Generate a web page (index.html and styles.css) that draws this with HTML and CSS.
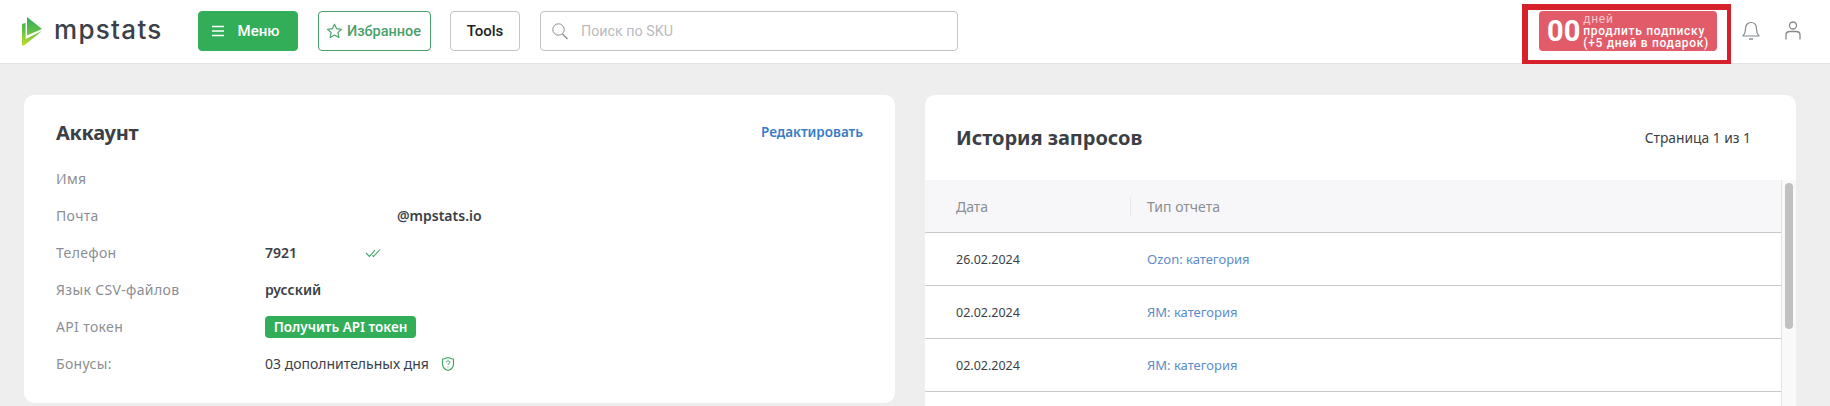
FILE: index.html
```html
<!DOCTYPE html>
<html lang="ru">
<head>
<meta charset="utf-8">
<title>MPSTATS</title>
<link rel="stylesheet" href="styles.css">
</head>
<body>
<div class="app">
  <header class="topbar">
    <a class="logo">
      <svg class="logo-mark" width="21" height="29" viewBox="0 0 21 29">
        <defs>
          <linearGradient id="lg" gradientUnits="userSpaceOnUse" x1="10" y1="0" x2="6" y2="29">
            <stop offset="0" stop-color="#2fae5a"/>
            <stop offset="0.5" stop-color="#62bf45"/>
            <stop offset="1" stop-color="#c0de2a"/>
          </linearGradient>
        </defs>
        <path d="M5 0 L20 12 L5 18.5 Z" fill="url(#lg)"/>
        <path d="M0 7 L3.6 6 L3.6 22 L20 14 L2 28.5 L0 28.5 Z" fill="url(#lg)"/>
      </svg>
      <span class="logo-text">mpstats</span>
    </a>
    <button class="btn btn-menu">
      <svg width="14" height="12" viewBox="0 0 14 12"><path d="M1 1.5H13M1 6H13M1 10.5H13" stroke="#fff" stroke-width="1.5" fill="none"/></svg>
      <span>Меню</span>
    </button>
    <button class="btn btn-fav">
      <svg width="17" height="16" viewBox="0 0 17 16"><path d="M8.5 1.2 L10.6 5.7 L15.5 6.3 L11.9 9.6 L12.9 14.5 L8.5 12 L4.1 14.5 L5.1 9.6 L1.5 6.3 L6.4 5.7 Z" fill="none" stroke="#4fa56d" stroke-width="1.2" stroke-linejoin="round"/></svg>
      <span>Избранное</span>
    </button>
    <button class="btn btn-tools">Tools</button>
    <div class="search">
      <svg width="16" height="17" viewBox="0 0 16 17"><circle cx="6.5" cy="6.5" r="5.7" fill="none" stroke="#8a8d91" stroke-width="1"/><path d="M10.5 11 L15.5 16" stroke="#8a8d91" stroke-width="1.3" fill="none"/></svg>
      <span>Поиск по SKU</span>
    </div>
    <div class="top-right">
      <div class="promo-wrap">
        <button class="promo">
          <span class="promo-num">00</span>
          <span class="promo-text">
            <span class="promo-days">дней</span>
            <span>продлить подписку</span>
            <span>(+5 дней в подарок)</span>
          </span>
        </button>
        <div class="highlight"></div>
      </div>
      <svg class="ico-bell" width="18" height="20" viewBox="0 0 18 20"><path d="M1 15 C3 13 3.5 11 3.5 8 C3.5 4 5.5 1.5 9 1.5 C12.5 1.5 14.5 4 14.5 8 C14.5 11 15 13 17 15 Z" fill="none" stroke="#85888c" stroke-width="1.2" stroke-linejoin="round"/><path d="M7 18 H11" stroke="#85888c" stroke-width="1.4"/></svg>
      <svg class="ico-user" width="16" height="20" viewBox="0 0 16 20"><circle cx="8" cy="4.5" r="3.5" fill="none" stroke="#85888c" stroke-width="1.3"/><path d="M1 18.5 V14 C1 11.5 3 10.5 5 10.5 H11 C13 10.5 15 11.5 15 14 V18.5" fill="none" stroke="#85888c" stroke-width="1.3"/></svg>
    </div>
  </header>

  <main class="content">
    <section class="card card-account">
      <div class="account-head">
        <h2 class="title-sm">Аккаунт</h2>
        <a class="edit-link">Редактировать</a>
      </div>
      <div class="info-grid">
        <div class="info-label">Имя</div><div class="info-value"></div>
        <div class="info-label">Почта</div><div class="info-value strong email">@mpstats.io</div>
        <div class="info-label">Телефон</div>
        <div class="info-value strong phone"><span class="phone-num">7921</span>
          <svg width="16" height="10" viewBox="0 0 16 10"><path d="M1 5 L4.5 8.5 L10 2 M7.5 7.5 L8.5 8.5 L15 1.5" fill="none" stroke="#3fa765" stroke-width="1.1"/></svg>
        </div>
        <div class="info-label">Язык CSV-файлов</div><div class="info-value strong">русский</div>
        <div class="info-label">API токен</div><div class="info-value"><button class="token-btn">Получить API токен</button></div>
        <div class="info-label">Бонусы:</div>
        <div class="info-value bonus"><span>03 дополнительных дня</span>
          <svg width="14" height="16" viewBox="0 0 14 15"><path d="M7 1 L12.5 2.8 V7.5 C12.5 10.5 10 13 7 14 C4 13 1.5 10.5 1.5 7.5 V2.8 Z" fill="none" stroke="#3fa765" stroke-width="1.2" stroke-linejoin="round"/><path d="M5.3 5.8 C5.3 3.8 8.8 3.8 8.8 5.8 C8.8 7.2 7 7 7 8.5 M7 10 V10.9" fill="none" stroke="#3fa765" stroke-width="1"/></svg>
        </div>
      </div>
    </section>

    <section class="card card-history">
      <div class="history-head">
        <h2 class="title-lg">История запросов</h2>
        <span class="pager">Страница 1 из 1</span>
      </div>
      <div class="table-wrap">
        <div class="table">
          <div class="row row-head">
            <div class="cell cell-date">Дата</div>
            <div class="cell cell-type"><span class="col-sep"></span>Тип отчета</div>
          </div>
          <div class="row">
            <div class="cell cell-date">26.02.2024</div>
            <div class="cell cell-type"><a class="report-link">Ozon: категория</a></div>
          </div>
          <div class="row">
            <div class="cell cell-date">02.02.2024</div>
            <div class="cell cell-type"><a class="report-link">ЯМ: категория</a></div>
          </div>
          <div class="row">
            <div class="cell cell-date">02.02.2024</div>
            <div class="cell cell-type"><a class="report-link">ЯМ: категория</a></div>
          </div>
        </div>
        <div class="scroll-track"><div class="scroll-thumb"></div></div>
      </div>
    </section>
  </main>
</div>
</body>
</html>
```

FILE: styles.css
```css
* { box-sizing: border-box; }
html, body { margin: 0; padding: 0; height: 100%; overflow: hidden; }
body { background: #eeeeee; font-family: "Noto Sans", "Liberation Sans", sans-serif; color: #3b3f46; }
a { text-decoration: none; }
button { font-family: Roboto, "Liberation Sans", sans-serif; cursor: pointer; }

.app { height: 406px; overflow: hidden; display: flex; flex-direction: column; }

.topbar { height: 64px; flex: none; background: #fff; border-bottom: 1px solid #e4e4e4; display: flex; align-items: center; padding: 0 29px 1px 22px; }
.logo { display: flex; align-items: center; gap: 11px; width: 176px; flex: none; }
.logo-mark { flex: none; margin-top: 1px; }
.logo-text { font-family: Inter, sans-serif; font-size: 26px; font-weight: 500; color: #3c4049; letter-spacing: 1.3px; line-height: 1; padding-bottom: 3px; }

.btn { height: 40px; border-radius: 4px; font-size: 15px; font-weight: 500; display: flex; align-items: center; justify-content: center; flex: none; padding: 0; background: #fff; border: 1px solid #c4c4c4; }
.btn-menu { width: 100px; background: #32ae59; border-color: #32ae59; color: #fff; gap: 13px; padding-right: 6px; }
.btn-fav { width: 113px; margin-left: 20px; border-color: #4b9f6b; color: #4b9f6b; gap: 4px; font-size: 14.5px; padding-right: 2px; }
.btn-tools { width: 70px; margin-left: 19px; color: #222; }

.search { width: 418px; height: 40px; margin-left: 20px; flex: none; border: 1px solid #c4c4c4; border-radius: 4px; display: flex; align-items: center; gap: 13px; padding-left: 11px; font-family: Roboto, sans-serif; font-size: 14.3px; color: #b9bbbe; }

.top-right { margin-left: auto; display: flex; align-items: center; }
.promo-wrap { position: relative; }
.promo { width: 178px; height: 40px; border: 0; border-radius: 4px; background: #e25b68; color: #fff; display: flex; align-items: center; padding: 0 0 0 8px; gap: 4px; text-align: left; }
.promo-num { font-size: 29px; font-weight: 700; line-height: 1; }
.promo-text { display: flex; flex-direction: column; font-size: 12px; font-weight: 500; line-height: 12px; letter-spacing: 0.7px; margin-left: -1px; }
.promo-days { color: #f6c6cb; font-weight: 400; }
.highlight { position: absolute; left: -17px; top: -7px; width: 209px; height: 60px; border-style: solid; border-color: #d6202c; border-width: 6px 4px 4px 6px; pointer-events: none; }
.ico-bell { margin-left: 25px; }
.ico-user { margin-left: 25px; }

.content { flex: 1; display: flex; align-items: flex-start; gap: 30px; padding: 31px 35px 0 24px; min-height: 0; }
.card { background: #fff; border-radius: 10px; flex: none; width: 871px; }
.card-account { height: 308px; padding: 0 32px; }
.card-history { height: 340px; overflow: hidden; }

.account-head { height: 66px; display: flex; align-items: center; justify-content: space-between; padding-top: 8px; }
.title-sm { margin: 0; font-size: 20px; font-weight: 700; letter-spacing: -0.3px; color: #3b3f46; }
.edit-link { font-size: 13.5px; font-weight: 600; color: #3a7cc6; }

.info-grid { display: grid; grid-template-columns: 209px 1fr; grid-auto-rows: 37px; margin-top: -1px; font-size: 14px; }
.info-label { color: #8b8e93; display: flex; align-items: center; letter-spacing: 0.35px; }
.info-value { display: flex; align-items: center; color: #3b3f46; }
.strong { font-weight: 600; }
.email { padding-left: 132px; }
.phone-num { width: 100px; }
.bonus { gap: 12px; }
.token-btn { height: 22px; width: 151px; border: 0; border-radius: 4px; background: #32ae59; color: #fff; font-family: "Noto Sans", sans-serif; font-size: 13.5px; font-weight: 600; padding: 0; }

.history-head { height: 85px; display: flex; align-items: center; justify-content: space-between; padding: 0 45px 0 31px; }
.title-lg { margin: 0; font-size: 20px; font-weight: 700; letter-spacing: -0.05px; color: #3b3f46; }
.pager { font-size: 13.8px; color: #3b3f46; }

.table-wrap { display: flex; align-items: stretch; height: 255px; }
.table { flex: 1; min-width: 0; }
.row { display: flex; height: 53px; border-bottom: 1px solid #c8c8c8; align-items: center; font-size: 12.5px; }
.row-head { background: #f7f7f9; color: #8b8e93; font-size: 14px; }
.cell-date { width: 222px; padding-left: 31px; flex: none; }
.cell-type { position: relative; flex: 1; font-size: 13px; }
.row-head .cell-type { font-size: 14px; }
.col-sep { position: absolute; left: -17px; top: 0; height: 20px; border-left: 1px solid #e8e8ea; }
.report-link { color: #5c8cca; }
.scroll-track { width: 15px; flex: none; background: #f9f9f9; border-left: 1px solid #e4e4e4; padding: 3px 3px 0 3px; }
.scroll-thumb { height: 146px; border-radius: 4px; background: #c1c1c1; }
```
